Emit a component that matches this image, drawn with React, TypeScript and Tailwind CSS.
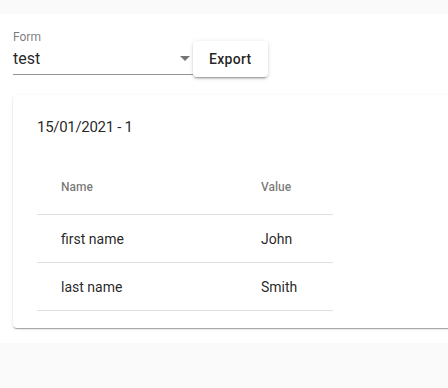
import React from "react";

export default function App() {
  const rows = [
    { name: "first name", value: "John" },
    { name: "last name", value: "Smith" },
  ];
  return (
    <div
      className="w-[448px] h-[388px] overflow-hidden bg-[#fafafa] pt-[14px]"
      style={{ fontFamily: "Roboto, 'Liberation Sans', sans-serif" }}
    >
      <div className="w-[520px] bg-white pt-[13px] pb-[15px] pl-[13px]">
        <div className="flex items-start">
          <div className="w-[180px] flex flex-col">
            <div className="h-[16px] text-[12px] leading-[16px] text-[rgba(0,0,0,0.54)] pt-[2px]">
              Form
            </div>
            <div className="relative h-[32px] border-b border-[rgba(0,0,0,0.42)] pt-[6px]">
              <div className="text-[16px] leading-[19px] text-[rgba(0,0,0,0.87)]">test</div>
              <svg
                viewBox="0 0 24 24"
                className="absolute right-[-4px] top-[3px] w-[24px] h-[24px] fill-[rgba(0,0,0,0.54)]"
              >
                <path d="M7 10l5 5 5-5z" />
              </svg>
            </div>
          </div>
          <button className="mt-[14px] h-[36px] min-w-[64px] px-[16px] rounded-[4px] bg-white text-[14px] font-medium tracking-[0.3px] text-[rgba(0,0,0,0.87)] shadow-[0px_3px_1px_-2px_rgba(0,0,0,0.2),0px_2px_2px_0px_rgba(0,0,0,0.14),0px_1px_5px_0px_rgba(0,0,0,0.12)]">
            Export
          </button>
        </div>
        <div className="mt-[18px] w-[480px] rounded-[4px] bg-white pt-[20px] pb-[17px] px-[24px] shadow-[0px_2px_1px_-1px_rgba(0,0,0,0.2),0px_1px_1px_0px_rgba(0,0,0,0.14),0px_1px_3px_0px_rgba(0,0,0,0.12)]">
          <div className="text-[15px] leading-[24px] tracking-[-0.3px] text-[rgba(0,0,0,0.87)]">15/01/2021 - 1</div>
          <table className="mt-[19px] w-[296px] border-collapse">
            <thead>
              <tr className="h-[56px] border-b border-[#e0e0e0]">
                <th className="w-[200px] pl-[24px] pt-[2px] text-left text-[12px] font-medium text-[rgba(0,0,0,0.54)]">
                  Name
                </th>
                <th className="pl-[24px] pt-[2px] text-left text-[12px] font-medium text-[rgba(0,0,0,0.54)]">
                  Value
                </th>
              </tr>
            </thead>
            <tbody>
              {rows.map((r) => (
                <tr key={r.name} className="h-[48px] border-b border-[#e0e0e0]">
                  <td className="pl-[24px] pt-[2px] text-[14px] text-[rgba(0,0,0,0.87)]">{r.name}</td>
                  <td className="pl-[24px] pt-[2px] text-[14px] text-[rgba(0,0,0,0.87)]">{r.value}</td>
                </tr>
              ))}
            </tbody>
          </table>
        </div>
      </div>
    </div>
  );
}
